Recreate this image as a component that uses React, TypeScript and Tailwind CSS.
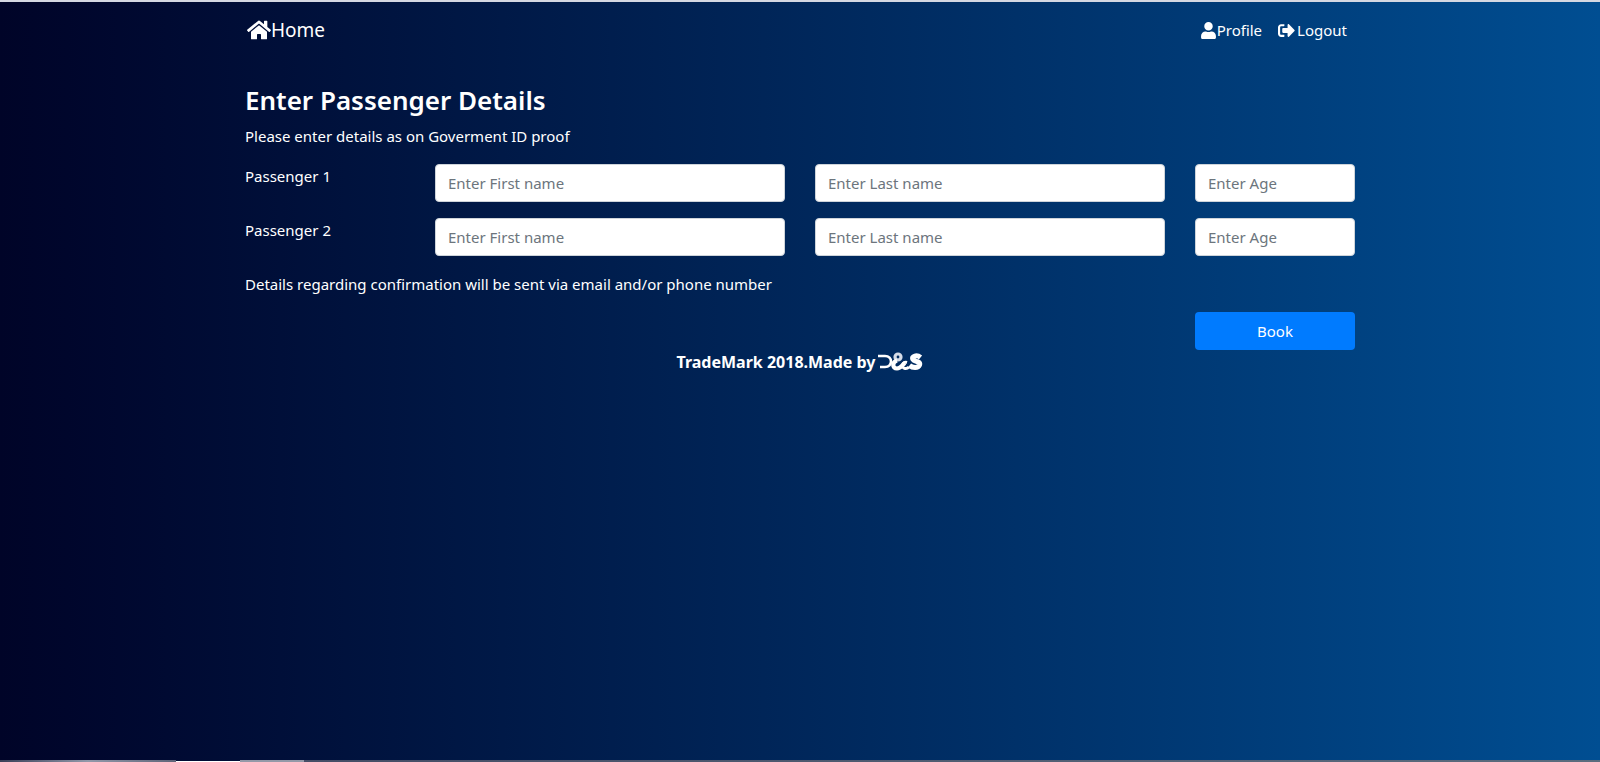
import { FaHome, FaUser, FaSignOutAlt } from 'react-icons/fa';

const field =
  'block h-[38px] w-full rounded border border-[#ced4da] bg-white px-3 py-1.5 text-[15px] leading-6 text-[#495057] placeholder:text-[#6c757d] placeholder:opacity-100';

function Passenger({ number }: { number: number }) {
  return (
    <fieldset className="mb-4 grid grid-cols-12 gap-x-[30px]">
      <span className="col-span-2">Passenger {number}</span>
      <input className={`${field} col-span-4`} type="text" placeholder="Enter First name" aria-label={`Passenger ${number} first name`} />
      <input className={`${field} col-span-4`} type="text" placeholder="Enter Last name" aria-label={`Passenger ${number} last name`} />
      <input className={`${field} col-span-2`} type="text" placeholder="Enter Age" aria-label={`Passenger ${number} age`} />
    </fieldset>
  );
}

function Logo() {
  return (
    <svg className="h-5 w-[46px]" viewBox="0 0 46 20" fill="none" role="img" aria-label="D&S">
      <path d="M1 4H8C16 4 16 15 8 15H3" stroke="#fff" strokeWidth="2.6" />
      <circle cx="21" cy="5" r="3" stroke="#d5dce8" strokeWidth="3.2" />
      <path d="M20 8.5C15 10 15 16.5 20 16.5C24 16.5 25 13 28 11" stroke="#fff" strokeWidth="4.2" />
      <path d="M30 10.5C25 9 24 16 28 16.5C30 17 31 16 32 15" stroke="#fff" strokeWidth="3" />
      <path d="M43.5 5.5C40 2.500 34 4 36 7.500C37.500 10 44 9 42.500 13C41 16.500 35.500 16 32.500 13.500" stroke="#fff" strokeWidth="5" />
    </svg>
  );
}

export default function App() {
  return (
    <div className="flex min-h-screen flex-col border-t-2 border-[#d5d8e2] bg-linear-to-r from-[#000428] to-[#004e92] font-['Noto_Sans',sans-serif] text-[15px] leading-6 text-white">
      <div className="mx-auto w-full max-w-[1140px] flex-1 px-[15px]">
        <nav className="flex h-14 items-center justify-between">
          <a href="#home" className="flex items-center pl-0.5 text-[19px]">
            <FaHome className="size-6" />
            Home
          </a>
          <div className="flex gap-4 pr-2">
            <a href="#profile" className="flex items-center">
              <FaUser className="size-[17px]" />
              Profile
            </a>
            <a href="#logout" className="flex items-center gap-0.5">
              <FaSignOutAlt className="size-[17px]" />
              Logout
            </a>
          </div>
        </nav>
        <main className="pt-[25px]">
          <h1 className="mb-[7px] text-[26px] leading-[34px] font-semibold">Enter Passenger Details</h1>
          <p className="mb-4">Please enter details as on Goverment ID proof</p>
          <form>
            <Passenger number={1} />
            <Passenger number={2} />
            <p className="mb-4">Details regarding confirmation will be sent via email and/or phone number</p>
            <div className="grid grid-cols-12 gap-x-[30px]">
              <button type="button" className="col-span-2 col-start-11 h-[38px] rounded bg-[#007bff]">
                Book
              </button>
            </div>
          </form>
        </main>
        <footer className="flex items-center justify-center gap-0.5 text-base font-bold">
          TradeMark 2018.Made by <Logo />
        </footer>
      </div>
      <div className="flex h-0.5">
        <div className="w-[11%] bg-linear-to-r from-[#3b4058] via-[#9299aa] to-[#5f6478]" />
        <div className="mt-px w-[4%] bg-white" />
        <div className="w-[4%] bg-[#9499a8]" />
        <div className="flex-1 bg-linear-to-r from-[#454d66] to-[#5b6c7e]" />
      </div>
    </div>
  );
}
